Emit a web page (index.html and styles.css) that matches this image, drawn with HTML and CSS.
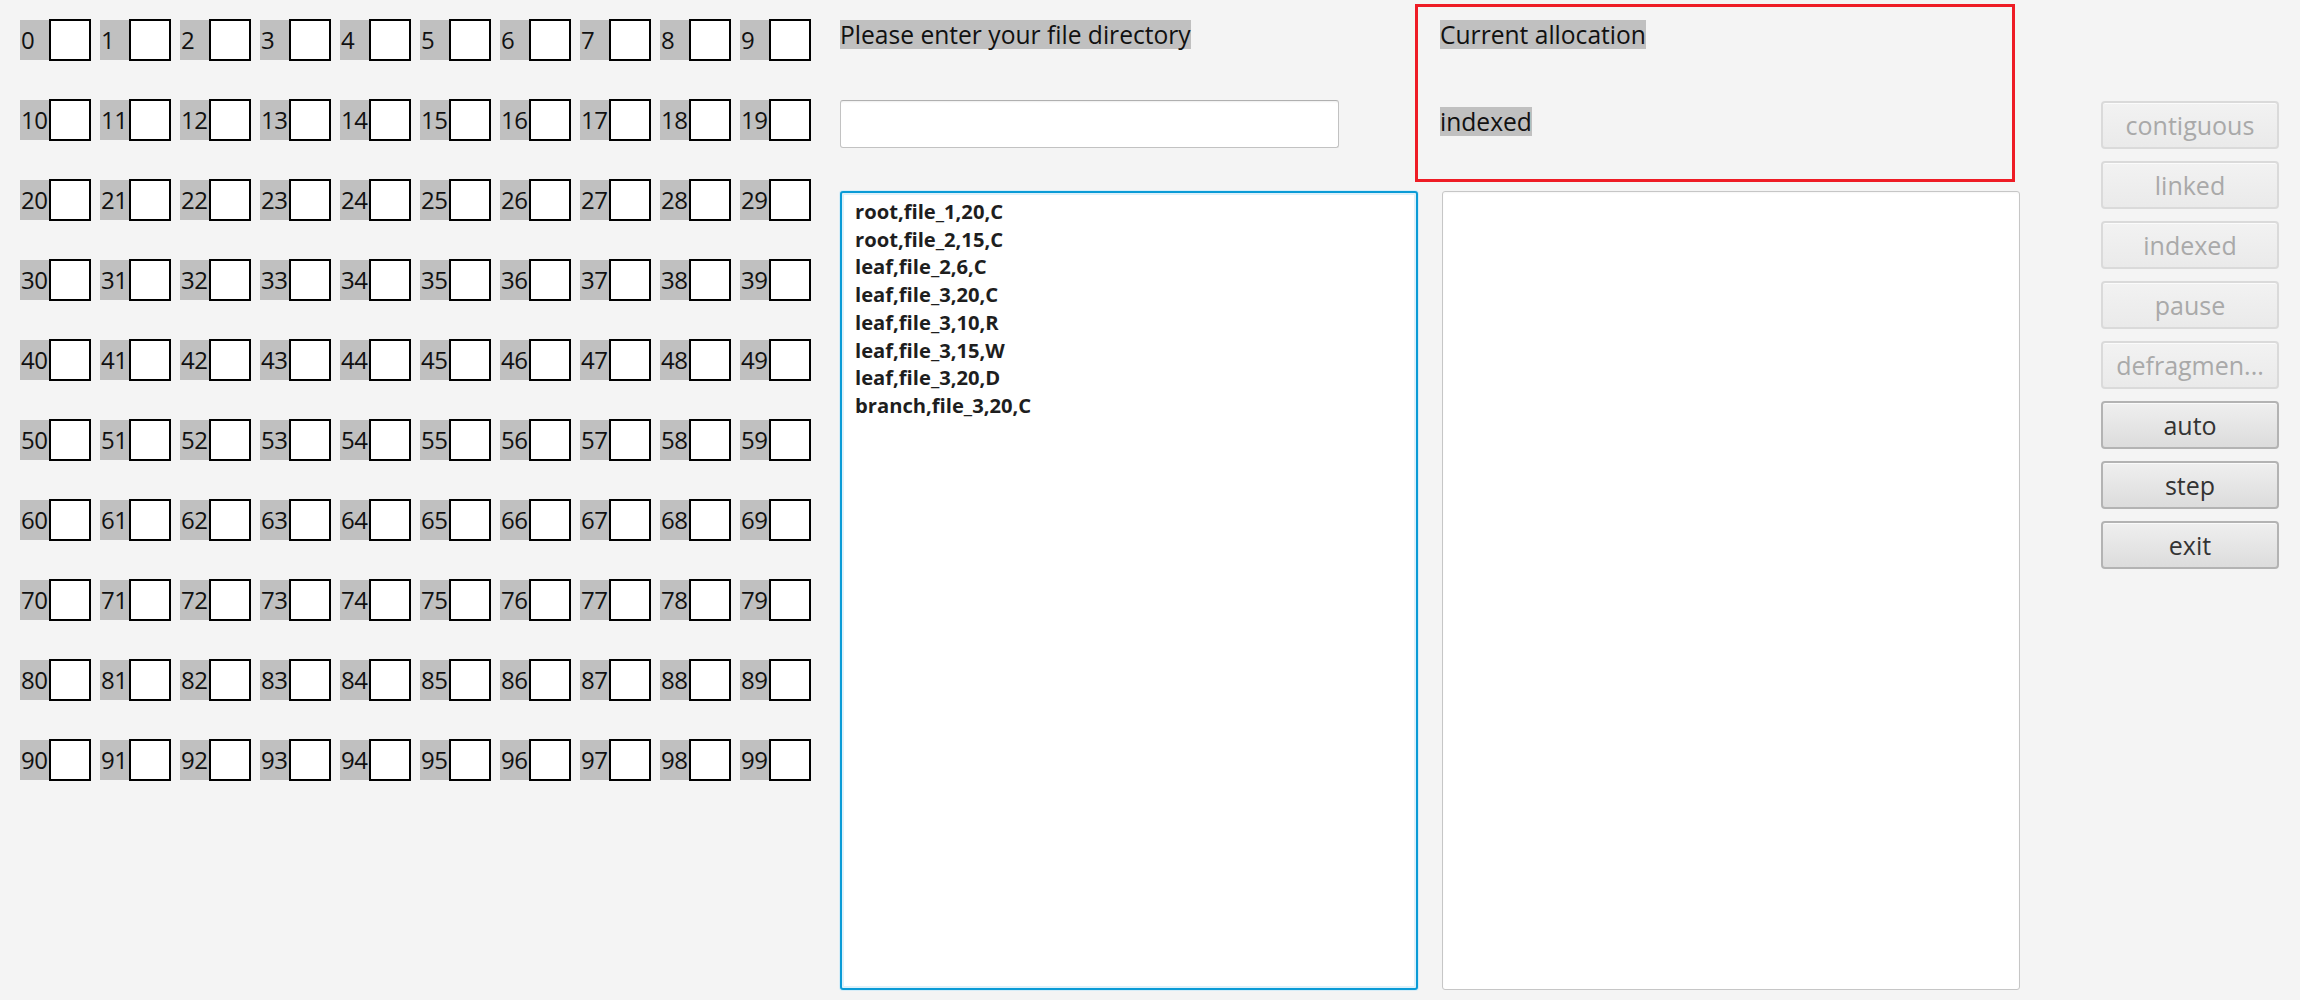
FILE: index.html
```html
<!DOCTYPE html>
<html lang="en">
<head>
<meta charset="utf-8">
<title>File allocation</title>
<link rel="stylesheet" href="styles.css">
</head>
<body>
<div class="app">
  <div class="cells">
    <div class="cell"><span class="num">0</span><span class="slot"></span></div>
    <div class="cell"><span class="num">1</span><span class="slot"></span></div>
    <div class="cell"><span class="num">2</span><span class="slot"></span></div>
    <div class="cell"><span class="num">3</span><span class="slot"></span></div>
    <div class="cell"><span class="num">4</span><span class="slot"></span></div>
    <div class="cell"><span class="num">5</span><span class="slot"></span></div>
    <div class="cell"><span class="num">6</span><span class="slot"></span></div>
    <div class="cell"><span class="num">7</span><span class="slot"></span></div>
    <div class="cell"><span class="num">8</span><span class="slot"></span></div>
    <div class="cell"><span class="num">9</span><span class="slot"></span></div>
    <div class="cell"><span class="num">10</span><span class="slot"></span></div>
    <div class="cell"><span class="num">11</span><span class="slot"></span></div>
    <div class="cell"><span class="num">12</span><span class="slot"></span></div>
    <div class="cell"><span class="num">13</span><span class="slot"></span></div>
    <div class="cell"><span class="num">14</span><span class="slot"></span></div>
    <div class="cell"><span class="num">15</span><span class="slot"></span></div>
    <div class="cell"><span class="num">16</span><span class="slot"></span></div>
    <div class="cell"><span class="num">17</span><span class="slot"></span></div>
    <div class="cell"><span class="num">18</span><span class="slot"></span></div>
    <div class="cell"><span class="num">19</span><span class="slot"></span></div>
    <div class="cell"><span class="num">20</span><span class="slot"></span></div>
    <div class="cell"><span class="num">21</span><span class="slot"></span></div>
    <div class="cell"><span class="num">22</span><span class="slot"></span></div>
    <div class="cell"><span class="num">23</span><span class="slot"></span></div>
    <div class="cell"><span class="num">24</span><span class="slot"></span></div>
    <div class="cell"><span class="num">25</span><span class="slot"></span></div>
    <div class="cell"><span class="num">26</span><span class="slot"></span></div>
    <div class="cell"><span class="num">27</span><span class="slot"></span></div>
    <div class="cell"><span class="num">28</span><span class="slot"></span></div>
    <div class="cell"><span class="num">29</span><span class="slot"></span></div>
    <div class="cell"><span class="num">30</span><span class="slot"></span></div>
    <div class="cell"><span class="num">31</span><span class="slot"></span></div>
    <div class="cell"><span class="num">32</span><span class="slot"></span></div>
    <div class="cell"><span class="num">33</span><span class="slot"></span></div>
    <div class="cell"><span class="num">34</span><span class="slot"></span></div>
    <div class="cell"><span class="num">35</span><span class="slot"></span></div>
    <div class="cell"><span class="num">36</span><span class="slot"></span></div>
    <div class="cell"><span class="num">37</span><span class="slot"></span></div>
    <div class="cell"><span class="num">38</span><span class="slot"></span></div>
    <div class="cell"><span class="num">39</span><span class="slot"></span></div>
    <div class="cell"><span class="num">40</span><span class="slot"></span></div>
    <div class="cell"><span class="num">41</span><span class="slot"></span></div>
    <div class="cell"><span class="num">42</span><span class="slot"></span></div>
    <div class="cell"><span class="num">43</span><span class="slot"></span></div>
    <div class="cell"><span class="num">44</span><span class="slot"></span></div>
    <div class="cell"><span class="num">45</span><span class="slot"></span></div>
    <div class="cell"><span class="num">46</span><span class="slot"></span></div>
    <div class="cell"><span class="num">47</span><span class="slot"></span></div>
    <div class="cell"><span class="num">48</span><span class="slot"></span></div>
    <div class="cell"><span class="num">49</span><span class="slot"></span></div>
    <div class="cell"><span class="num">50</span><span class="slot"></span></div>
    <div class="cell"><span class="num">51</span><span class="slot"></span></div>
    <div class="cell"><span class="num">52</span><span class="slot"></span></div>
    <div class="cell"><span class="num">53</span><span class="slot"></span></div>
    <div class="cell"><span class="num">54</span><span class="slot"></span></div>
    <div class="cell"><span class="num">55</span><span class="slot"></span></div>
    <div class="cell"><span class="num">56</span><span class="slot"></span></div>
    <div class="cell"><span class="num">57</span><span class="slot"></span></div>
    <div class="cell"><span class="num">58</span><span class="slot"></span></div>
    <div class="cell"><span class="num">59</span><span class="slot"></span></div>
    <div class="cell"><span class="num">60</span><span class="slot"></span></div>
    <div class="cell"><span class="num">61</span><span class="slot"></span></div>
    <div class="cell"><span class="num">62</span><span class="slot"></span></div>
    <div class="cell"><span class="num">63</span><span class="slot"></span></div>
    <div class="cell"><span class="num">64</span><span class="slot"></span></div>
    <div class="cell"><span class="num">65</span><span class="slot"></span></div>
    <div class="cell"><span class="num">66</span><span class="slot"></span></div>
    <div class="cell"><span class="num">67</span><span class="slot"></span></div>
    <div class="cell"><span class="num">68</span><span class="slot"></span></div>
    <div class="cell"><span class="num">69</span><span class="slot"></span></div>
    <div class="cell"><span class="num">70</span><span class="slot"></span></div>
    <div class="cell"><span class="num">71</span><span class="slot"></span></div>
    <div class="cell"><span class="num">72</span><span class="slot"></span></div>
    <div class="cell"><span class="num">73</span><span class="slot"></span></div>
    <div class="cell"><span class="num">74</span><span class="slot"></span></div>
    <div class="cell"><span class="num">75</span><span class="slot"></span></div>
    <div class="cell"><span class="num">76</span><span class="slot"></span></div>
    <div class="cell"><span class="num">77</span><span class="slot"></span></div>
    <div class="cell"><span class="num">78</span><span class="slot"></span></div>
    <div class="cell"><span class="num">79</span><span class="slot"></span></div>
    <div class="cell"><span class="num">80</span><span class="slot"></span></div>
    <div class="cell"><span class="num">81</span><span class="slot"></span></div>
    <div class="cell"><span class="num">82</span><span class="slot"></span></div>
    <div class="cell"><span class="num">83</span><span class="slot"></span></div>
    <div class="cell"><span class="num">84</span><span class="slot"></span></div>
    <div class="cell"><span class="num">85</span><span class="slot"></span></div>
    <div class="cell"><span class="num">86</span><span class="slot"></span></div>
    <div class="cell"><span class="num">87</span><span class="slot"></span></div>
    <div class="cell"><span class="num">88</span><span class="slot"></span></div>
    <div class="cell"><span class="num">89</span><span class="slot"></span></div>
    <div class="cell"><span class="num">90</span><span class="slot"></span></div>
    <div class="cell"><span class="num">91</span><span class="slot"></span></div>
    <div class="cell"><span class="num">92</span><span class="slot"></span></div>
    <div class="cell"><span class="num">93</span><span class="slot"></span></div>
    <div class="cell"><span class="num">94</span><span class="slot"></span></div>
    <div class="cell"><span class="num">95</span><span class="slot"></span></div>
    <div class="cell"><span class="num">96</span><span class="slot"></span></div>
    <div class="cell"><span class="num">97</span><span class="slot"></span></div>
    <div class="cell"><span class="num">98</span><span class="slot"></span></div>
    <div class="cell"><span class="num">99</span><span class="slot"></span></div>
  </div>

  <div class="middle">
    <div class="tag">Please enter your file directory</div>
    <input class="field" type="text" aria-label="file directory">
    <ul class="list focused">
      <li>root,file_1,20,C</li>
      <li>root,file_2,15,C</li>
      <li>leaf,file_2,6,C</li>
      <li>leaf,file_3,20,C</li>
      <li>leaf,file_3,10,R</li>
      <li>leaf,file_3,15,W</li>
      <li>leaf,file_3,20,D</li>
      <li>branch,file_3,20,C</li>
    </ul>
  </div>

  <div class="right">
    <div class="alloc">
      <div class="tag">Current allocation</div>
      <div class="tag tag-mode">indexed</div>
    </div>
    <ul class="list plain"></ul>
  </div>

  <div class="buttons">
    <button class="btn" disabled>contiguous</button>
    <button class="btn" disabled>linked</button>
    <button class="btn" disabled>indexed</button>
    <button class="btn" disabled>pause</button>
    <button class="btn" disabled>defragmen...</button>
    <button class="btn">auto</button>
    <button class="btn">step</button>
    <button class="btn">exit</button>
  </div>
</div>
</body>
</html>
```

FILE: styles.css
```css
* {
  box-sizing: border-box;
}

html, body {
  margin: 0;
  padding: 0;
}

body {
  width: 2300px;
  height: 1000px;
  background: #f4f4f4;
  font-family: "Open Sans", "Noto Sans", sans-serif;
  color: #111;
  overflow: hidden;
}

.app {
  display: flex;
  align-items: flex-start;
}

/* memory block grid */
.cells {
  margin-left: 20px;
  margin-top: 19px;
  width: 800px;
  display: grid;
  grid-template-columns: repeat(10, 80px);
  grid-auto-rows: 42px;
  row-gap: 38px;
}

.cell {
  display: flex;
  align-items: center;
}

.num {
  width: 29px;
  height: 40px;
  background: #c0c0c0;
  font-size: 24px;
  line-height: 40px;
  padding-left: 1px;
  letter-spacing: -0.5px;
  white-space: nowrap;
  overflow: visible;
}

.slot {
  width: 42px;
  height: 42px;
  background: #fff;
  border: 2px solid #000;
}

/* labels */
.tag {
  align-self: flex-start;
  display: inline-block;
  background: #c0c0c0;
  font-size: 24.6px;
  line-height: 29px;
  height: 29px;
  white-space: nowrap;
}

/* middle column */
.middle {
  margin-left: 20px;
  width: 578px;
  display: flex;
  flex-direction: column;
}

.middle .tag {
  margin-top: 20px;
}

.field {
  margin-top: 51px;
  width: 499px;
  height: 48px;
  background: #fff;
  border: 1px solid #c2c2c2;
  border-top-color: #b0b0b0;
  border-radius: 3px;
  box-shadow: inset 0 2px 2px -1px rgba(0, 0, 0, 0.07);
  font-family: inherit;
  font-size: 24px;
  padding: 0 10px;
  outline: none;
}

.list {
  list-style: none;
  margin: 0;
  width: 578px;
  height: 799px;
  background: #fff;
  border-radius: 3px;
}

.middle .list {
  margin-top: 43px;
}

.list.focused {
  border: 2px solid #0a9bd6;
  box-shadow: 0 0 0 1px #d6edf8, inset 0 0 0 2px #def1fa;
  padding: 5px 0 0 13px;
}

.list li {
  font-size: 20.2px;
  font-weight: 700;
  line-height: 27.7px;
  color: #1e1e1e;
  white-space: nowrap;
}

/* right column */
.right {
  margin-left: -3px;
  width: 605px;
  display: flex;
  flex-direction: column;
}

.alloc {
  margin-top: 4px;
  width: 600px;
  height: 178px;
  border: 3px solid #ee1c25;
  padding: 13px 0 0 22px;
  display: flex;
  flex-direction: column;
}

.alloc .tag-mode {
  margin-top: 58px;
}

.list.plain {
  margin-top: 9px;
  margin-left: 27px;
  border: 1px solid #c6c6c6;
  box-shadow: inset 0 1px 2px rgba(0, 0, 0, 0.04);
  padding: 0;
}

/* buttons */
.buttons {
  margin-left: 81px;
  margin-top: 101px;
  width: 178px;
  display: flex;
  flex-direction: column;
  gap: 12px;
}

.btn {
  width: 178px;
  height: 48px;
  border: 2px solid #b3b3b3;
  border-radius: 4px;
  background: linear-gradient(#efefef, #dcdcdc);
  box-shadow: inset 0 1px 0 rgba(255, 255, 255, 0.7);
  font-family: inherit;
  font-size: 25px;
  color: #333;
  padding: 0;
  line-height: 1;
}

.btn:disabled {
  border-color: #dadada;
  background: linear-gradient(#f2f2f2, #eaeaea);
  color: #a9a9a9;
}
```
